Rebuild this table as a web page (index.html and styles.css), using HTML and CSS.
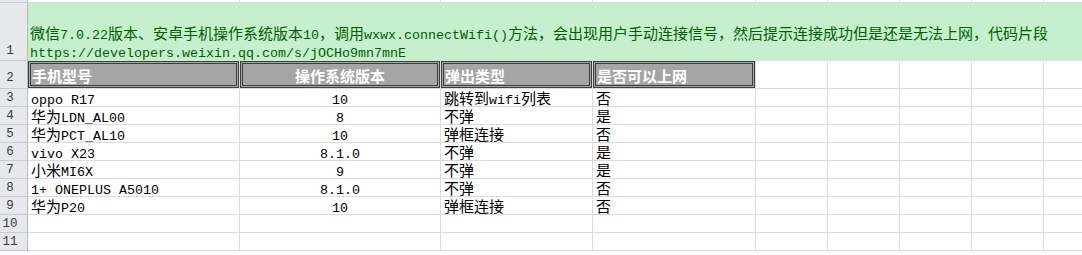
FILE: index.html
```html
<!DOCTYPE html>
<html lang="zh-CN">
<head>
<meta charset="utf-8">
<title>Sheet</title>
<link rel="stylesheet" href="styles.css">
</head>
<body>
<div class="sheet">
  <!-- row 0 (partially visible) -->
  <div class="rh"></div><div class="c"></div><div class="c"></div><div class="c"></div><div class="c"></div><div class="c"></div><div class="c"></div><div class="c"></div><div class="c"></div><div class="c"></div>

  <!-- row 1 -->
  <div class="rh r1">1</div>
  <div class="good">
    <div class="ln">微信<span class="l">7.0.22</span>版本、安卓手机操作系统版本<span class="l">10</span>，调用<span class="l">wxwx.connectWifi()</span>方法，会出现用户手动连接信号，然后提示连接成功但是还是无法上网，代码片段</div>
    <div class="ln"><span class="l">https://developers.weixin.qq.com/s/jOCHo9mn7mnE</span></div>
  </div>

  <!-- row 2 -->
  <div class="rh r2">2</div>
  <div class="c hd"><div class="box">手机型号</div></div>
  <div class="c hd"><div class="box mid">操作系统版本</div></div>
  <div class="c hd"><div class="box">弹出类型</div></div>
  <div class="c hd"><div class="box">是否可以上网</div></div>
  <div class="c"></div><div class="c"></div><div class="c"></div><div class="c"></div><div class="c"></div>

  <!-- row 3 -->
  <div class="rh">3</div>
  <div class="c"><span class="l">oppo R17</span></div>
  <div class="c mid"><span class="l">10</span></div>
  <div class="c">跳转到<span class="l">wifi</span>列表</div>
  <div class="c">否</div>
  <div class="c"></div><div class="c"></div><div class="c"></div><div class="c"></div><div class="c"></div>

  <!-- row 4 -->
  <div class="rh">4</div>
  <div class="c">华为<span class="l">LDN_AL00</span></div>
  <div class="c mid"><span class="l">8</span></div>
  <div class="c">不弹</div>
  <div class="c">是</div>
  <div class="c"></div><div class="c"></div><div class="c"></div><div class="c"></div><div class="c"></div>

  <!-- row 5 -->
  <div class="rh">5</div>
  <div class="c">华为<span class="l">PCT_AL10</span></div>
  <div class="c mid"><span class="l">10</span></div>
  <div class="c">弹框连接</div>
  <div class="c">否</div>
  <div class="c"></div><div class="c"></div><div class="c"></div><div class="c"></div><div class="c"></div>

  <!-- row 6 -->
  <div class="rh">6</div>
  <div class="c"><span class="l">vivo X23</span></div>
  <div class="c mid"><span class="l">8.1.0</span></div>
  <div class="c">不弹</div>
  <div class="c">是</div>
  <div class="c"></div><div class="c"></div><div class="c"></div><div class="c"></div><div class="c"></div>

  <!-- row 7 -->
  <div class="rh">7</div>
  <div class="c">小米<span class="l">MI6X</span></div>
  <div class="c mid"><span class="l">9</span></div>
  <div class="c">不弹</div>
  <div class="c">是</div>
  <div class="c"></div><div class="c"></div><div class="c"></div><div class="c"></div><div class="c"></div>

  <!-- row 8 -->
  <div class="rh">8</div>
  <div class="c"><span class="l">1+ ONEPLUS A5010</span></div>
  <div class="c mid"><span class="l">8.1.0</span></div>
  <div class="c">不弹</div>
  <div class="c">否</div>
  <div class="c"></div><div class="c"></div><div class="c"></div><div class="c"></div><div class="c"></div>

  <!-- row 9 -->
  <div class="rh">9</div>
  <div class="c">华为<span class="l">P20</span></div>
  <div class="c mid"><span class="l">10</span></div>
  <div class="c">弹框连接</div>
  <div class="c">否</div>
  <div class="c"></div><div class="c"></div><div class="c"></div><div class="c"></div><div class="c"></div>

  <!-- row 10 -->
  <div class="rh">10</div>
  <div class="c"></div><div class="c"></div><div class="c"></div><div class="c"></div><div class="c"></div><div class="c"></div><div class="c"></div><div class="c"></div><div class="c"></div>

  <!-- row 11 -->
  <div class="rh">11</div>
  <div class="c"></div><div class="c"></div><div class="c"></div><div class="c"></div><div class="c"></div><div class="c"></div><div class="c"></div><div class="c"></div><div class="c"></div>
</div>
</body>
</html>
```

FILE: styles.css
```css
html, body {
  margin: 0;
  padding: 0;
  background: #ffffff;
}

body {
  width: 1082px;
  height: 255px;
  overflow: hidden;
}

.sheet {
  display: grid;
  grid-template-columns: 28px 212px 201px 152px 163px repeat(5, 72px);
  grid-template-rows: 3px 58px 28px repeat(9, 18px);
  width: 1116px;
  font-family: "Noto Sans CJK SC", sans-serif;
  font-size: 15px;
  line-height: 17px;
  color: #000000;
}

.c {
  box-sizing: border-box;
  border-right: 1px solid #dadcdd;
  border-bottom: 1px solid #dadcdd;
  padding: 0 3px;
  white-space: nowrap;
  line-height: 17px;
}

.mid {
  text-align: center;
}

.l {
  font-family: "Liberation Mono", monospace;
  font-size: 13.33px;
  line-height: 1px;
}

.rh {
  box-sizing: border-box;
  background: #e6e8ec;
  border-right: 1px solid #b4b8bf;
  border-bottom: 1px solid #c8ccd2;
  text-align: center;
  padding: 2px 7px 0 0;
  font-family: "Liberation Mono", monospace;
  font-size: 12.5px;
  line-height: 15px;
  color: #3a3a3a;
  overflow: hidden;
}

.rh.r1 {
  padding-top: 41px;
}

.rh.r2 {
  padding-top: 10px;
}

.good {
  grid-column: 2 / -1;
  background: #c6efce;
  color: #006100;
  display: flex;
  flex-direction: column;
  justify-content: flex-end;
  padding: 0 3px 1px 2px;
  line-height: 18px;
  white-space: nowrap;
}

.hd {
  padding: 0;
}

.box {
  box-sizing: border-box;
  height: 100%;
  border: 3px double #3f3f3f;
  background: #a5a5a5;
  color: #ffffff;
  font-weight: bold;
  padding: 2px 1px 0;
  line-height: 19px;
  white-space: nowrap;
}

.box.mid {
  text-align: center;
}
```
